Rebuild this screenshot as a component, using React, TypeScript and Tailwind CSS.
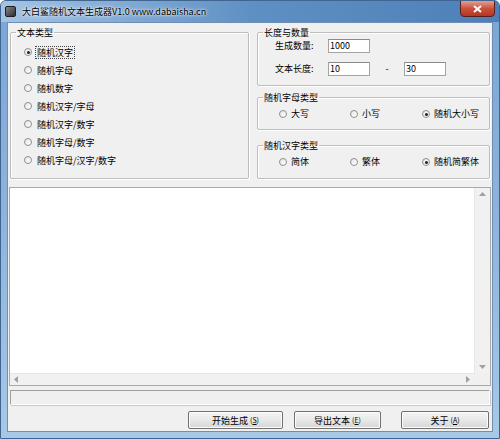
import type { ReactNode } from 'react';

const font = { fontFamily: '"Noto Sans CJK SC", "Liberation Sans", sans-serif' };

function Radio({ checked = false }: { checked?: boolean }) {
  return (
    <span className="w-[8px] h-[8px] rounded-full border border-[#8e8f8f] bg-gradient-to-br from-[#e6e6e6] to-white flex items-center justify-center shrink-0">
      {checked && <span className="w-[3px] h-[3px] rounded-full bg-[#222]" />}
    </span>
  );
}

function GroupBox({ title, className = '', children }: { title: string; className?: string; children: ReactNode }) {
  return (
    <fieldset className={`border border-[#bdbdbd] rounded-[2px] shadow-[1px_1px_0_#fff,inset_1px_1px_0_#fff] ${className}`}>
      <legend className="ml-[5px] px-[1px] text-[9px] leading-[11px] text-black">{title}</legend>
      {children}
    </fieldset>
  );
}

function Button({ label, hot }: { label: string; hot: string }) {
  return (
    <button className="h-[18px] rounded-[2px] border border-[#707070] bg-gradient-to-b from-[#f4f4f4] via-[#e8e8e8] to-[#d6d6d6] shadow-[inset_0_0_0_1px_#fcfcfc] text-[9px] leading-none text-black flex items-center justify-center">
      {label}
      <span className="text-[7px] ml-[2px]">
        (<u>{hot}</u>)
      </span>
    </button>
  );
}

export default function App() {
  const types = ['随机汉字', '随机字母', '随机数字', '随机汉字/字母', '随机汉字/数字', '随机字母/数字', '随机字母/汉字/数字'];

  return (
    <div style={font} className="w-[500px] h-[439px] flex flex-col bg-gradient-to-b from-[#7aa6d4] via-[#8db4dc] to-[#a8c8e6] rounded-t-[6px] border border-[#3f6590] overflow-hidden">
      {/* title bar */}
      <div className="h-[21px] flex items-center relative bg-gradient-to-r from-[#a4c4e4] via-[#5f90c4] to-[#4d80b8]">
        <span className="ml-[4px] w-[11px] h-[11px] rounded-[2px] bg-gradient-to-br from-[#8a8a8a] to-[#2e2e2e] border border-[#1e1e1e]" />
        <span className="ml-[6px] text-[9px] text-black [text-shadow:0_0_4px_#fff,0_0_2px_#fff]">
          大白鲨随机文本生成器V1.0 www.dabaisha.cn
        </span>
        <div className="absolute right-[4px] top-[-1px] w-[35px] h-[17px] rounded-b-[4px] border border-[#5a1e1e] bg-gradient-to-b from-[#e0a090] via-[#c9503c] to-[#b73421] flex items-center justify-center">
          <svg width="9" height="8" viewBox="0 0 9 8">
            <path d="M1 1 L8 7 M8 1 L1 7" stroke="#fff" strokeWidth="2" />
          </svg>
        </div>
      </div>

      {/* client area */}
      <div className="mx-[6px] mb-[6px] flex-1 bg-[#f0f0f0] border border-[#6e8fb3] flex flex-col">
        <div className="flex gap-[8px] px-[2px] pt-[4px] h-[157px]">
          <GroupBox title="文本类型" className="w-[239px] h-[152px]">
            <div className="flex flex-col pt-[5px] pl-[13px]">
              {types.map((t, i) => (
                <div key={t} className="h-[18px] flex items-center gap-[3px] text-[9px] text-black">
                  <Radio checked={i === 0} />
                  <span className={i === 0 ? 'border border-dotted border-[#444] px-[1px] leading-[11px]' : 'px-[2px] leading-[11px]'}>{t}</span>
                </div>
              ))}
            </div>
          </GroupBox>

          <div className="flex flex-col w-[233px]">
            <GroupBox title="长度与数量" className="h-[59px]">
              <div className="flex flex-col gap-[9px] pt-[1px] text-[9px] text-black">
                <div className="flex items-center h-[14px]">
                  <span className="w-[70px] pl-[17px]">生成数量:</span>
                  <span className="w-[42px] h-[14px] border border-[#a3a3a3] border-t-[#8a8a8a] bg-white leading-[12px] pl-[1px]">1000</span>
                </div>
                <div className="flex items-center h-[14px]">
                  <span className="w-[70px] pl-[17px]">文本长度:</span>
                  <span className="w-[42px] h-[14px] border border-[#a3a3a3] border-t-[#8a8a8a] bg-white leading-[12px] pl-[1px]">10</span>
                  <span className="w-[34px] text-center">-</span>
                  <span className="w-[42px] h-[14px] border border-[#a3a3a3] border-t-[#8a8a8a] bg-white leading-[12px] pl-[1px]">30</span>
                </div>
              </div>
            </GroupBox>

            <GroupBox title="随机字母类型" className="h-[38px] mt-[6px]">
              <div className="flex items-center pl-[21px] h-[22px] text-[9px] text-black">
                <div className="w-[71px] flex items-center gap-[4px]"><Radio />大写</div>
                <div className="w-[72px] flex items-center gap-[4px]"><Radio />小写</div>
                <div className="flex items-center gap-[4px]"><Radio checked />随机大小写</div>
              </div>
            </GroupBox>

            <GroupBox title="随机汉字类型" className="h-[39px] mt-[10px]">
              <div className="flex items-center pl-[21px] h-[22px] text-[9px] text-black">
                <div className="w-[71px] flex items-center gap-[4px]"><Radio />简体</div>
                <div className="w-[72px] flex items-center gap-[4px]"><Radio />繁体</div>
                <div className="flex items-center gap-[4px]"><Radio checked />随机简繁体</div>
              </div>
            </GroupBox>
          </div>
        </div>

        {/* output text area */}
        <div className="mt-[7px] mx-[1px] h-[199px] border border-[#a9a9a9] bg-white flex flex-col">
          <div className="flex flex-1">
            <div className="flex-1" />
            <div className="w-[16px] bg-[#f1f1f1] border-l border-[#e6e6e6] flex flex-col items-center justify-between py-[4px]">
              <svg width="7" height="4" viewBox="0 0 7 4"><path d="M0 4 L3.5 0 L7 4 Z" fill="#a0a0a0" /></svg>
              <svg width="7" height="4" viewBox="0 0 7 4"><path d="M0 0 L3.5 4 L7 0 Z" fill="#a0a0a0" /></svg>
            </div>
          </div>
          <div className="flex h-[12px]">
            <div className="flex-1 bg-[#f1f1f1] border-t border-[#e6e6e6] flex items-center justify-between px-[4px]">
              <svg width="4" height="7" viewBox="0 0 4 7"><path d="M4 0 L0 3.5 L4 7 Z" fill="#a0a0a0" /></svg>
              <svg width="4" height="7" viewBox="0 0 4 7"><path d="M0 0 L4 3.5 L0 7 Z" fill="#a0a0a0" /></svg>
            </div>
            <div className="w-[16px] bg-[#f0f0f0]" />
          </div>
        </div>

        {/* status box */}
        <div className="mt-[4px] mx-[2px] h-[15px] border border-[#a0a0a0] border-r-white border-b-white shadow-[1px_1px_0_#c8c8c8] bg-[#f0f0f0]" />

        {/* buttons */}
        <div className="mt-[6px] flex pl-[180px] gap-[11px]">
          <div className="w-[95px] flex flex-col"><Button label="开始生成" hot="S" /></div>
          <div className="w-[87px] flex flex-col"><Button label="导出文本" hot="E" /></div>
          <div className="w-[88px] ml-[9px] flex flex-col"><Button label="关于" hot="A" /></div>
        </div>
      </div>
    </div>
  );
}
